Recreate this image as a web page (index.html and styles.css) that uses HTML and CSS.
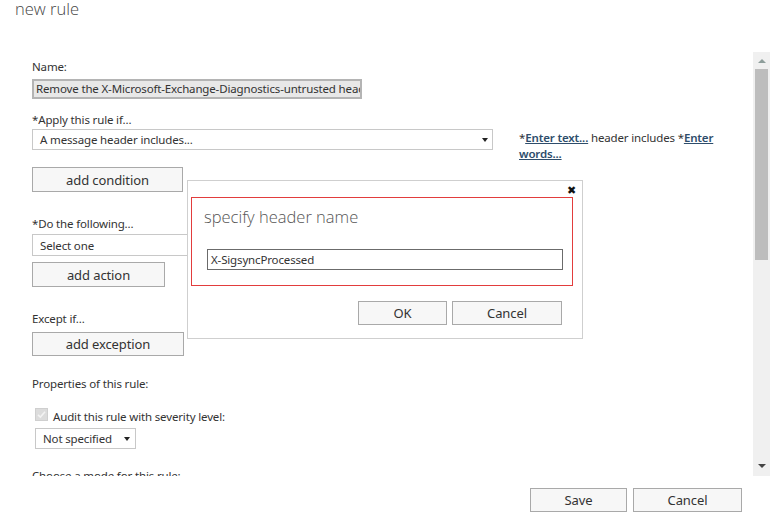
FILE: index.html
```html
<!DOCTYPE html>
<html>
<head>
<meta charset="utf-8">
<link rel="stylesheet" href="styles.css">
</head>
<body>
<div class="page">
  <header class="head"><h1 class="title">new rule</h1></header>
  <div class="main">
    <div class="content">
      <div class="label first">Name:</div>
      <div class="name-input">Remove the X-Microsoft-Exchange-Diagnostics-untrusted header</div>

      <div class="label gap13">*Apply this rule if...</div>
      <div class="cond-row">
        <div class="select wide"><span>A message header includes...</span><span class="caret"></span></div>
        <div class="cond-text">*<a class="lnk">Enter text...</a> header includes *<a class="lnk">Enter words...</a></div>
      </div>
      <button class="btn b-cond">add condition</button>

      <div class="label gap-do">*Do the following...</div>
      <div class="select action"><span>Select one</span></div>
      <button class="btn b-act">add action</button>

      <div class="label gap-ex">Except if...</div>
      <button class="btn b-exc">add exception</button>

      <div class="label gap-prop">Properties of this rule:</div>
      <div class="check-row">
        <svg class="chk" width="13" height="13" viewBox="0 0 13 13"><rect x="0.5" y="0.5" width="12" height="12" fill="#dcdcdc" stroke="#cfcfcf"/><path d="M3 6.8 L5.4 9 L10 3.8" fill="none" stroke="#f3f3f3" stroke-width="1.6"/></svg>
        <span>Audit this rule with severity level:</span>
      </div>
      <div class="select small"><span>Not specified</span><span class="caret"></span></div>
      <div class="label gap-mode">Choose a mode for this rule:</div>
    </div>
    <div class="scrollbar">
      <div class="arr up"></div>
      <div class="thumb"></div>
      <div class="track"></div>
      <div class="arr down"></div>
    </div>
  </div>
  <footer class="foot">
    <button class="btn f-save">Save</button>
    <button class="btn f-cancel">Cancel</button>
  </footer>

  <div class="dialog">
    <div class="close">&#x2716;</div>
    <div class="dlg-box">
      <div class="dlg-title">specify header name</div>
      <div class="dlg-input">X-SigsyncProcessed</div>
    </div>
    <div class="dlg-btns">
      <button class="btn d-ok">OK</button>
      <button class="btn d-cancel">Cancel</button>
    </div>
  </div>
</div>
</body>
</html>
```

FILE: styles.css
```css
* { box-sizing: border-box; }
html, body { margin: 0; padding: 0; background: #fff; }
body {
  font-family: "Noto Sans", "Open Sans", "DejaVu Sans", sans-serif;
  font-size: 11.5px;
  letter-spacing: -0.15px;
  color: #333;
  width: 773px;
  height: 516px;
  overflow: hidden;
}
.page { position: relative; width: 773px; height: 516px; }

.head { height: 52px; }
.title {
  margin: 0;
  padding: 0 0 0 15px;
  font-family: "Open Sans", "Noto Sans", sans-serif;
  font-weight: 300;
  font-size: 16.5px;
  letter-spacing: 0;
  line-height: 20px;
  color: #444;
  position: relative;
  top: -1px;
}

.main { display: flex; height: 424px; }
.content {
  flex: 1;
  height: 424px;
  overflow: hidden;
  padding: 7px 0 0 32px;
}
.label { line-height: 16px; height: 16px; white-space: nowrap; }
.name-input {
  margin-top: 4px;
  width: 330px;
  height: 20px;
  border: 2px solid #b4b4b4;
  background: #e8e8e8;
  line-height: 16px;
  padding-left: 2px;
  white-space: nowrap;
  overflow: hidden;
}
.gap13 { margin-top: 13px; }

.cond-row { display: flex; align-items: flex-start; margin-top: 1px; height: 21px; }
.select {
  height: 21px;
  border: 1px solid #c8c8c8;
  background: #fff;
  display: flex;
  align-items: center;
  justify-content: space-between;
  padding: 0 4px 0 7px;
  white-space: nowrap;
}
.select.wide { width: 461px; flex: none; }
.caret {
  width: 0; height: 0;
  border-left: 3.5px solid transparent;
  border-right: 3.5px solid transparent;
  border-top: 4px solid #222;
}
.cond-text {
  margin-left: 26px;
  width: 196px;
  line-height: 16px;
  padding-top: 1px;
}
.lnk {
  color: #2e4d6b;
  font-weight: 600;
  text-decoration: underline;
}

.btn {
  display: block;
  font-family: "Noto Sans", "Open Sans", sans-serif;
  font-size: 13px;
  letter-spacing: -0.1px;
  color: #333;
  background: #f7f7f7;
  border: 1px solid #a9a9a9;
  padding: 0;
  text-align: center;
  line-height: 22px;
  height: 24px;
}
.b-cond { width: 151px; margin-top: 17px; height: 25px; }
.gap-do { margin-top: 24px; }
.select.action { width: 170px; margin-top: 2px; padding-left: 7px; border-right: none; height: 22px; }
.b-act { width: 133px; margin-top: 6px; height: 25px; }
.gap-ex { margin-top: 24px; }
.b-exc { width: 152px; margin-top: 5px; height: 24px; }
.gap-prop { margin-top: 20px; }

.check-row {
  display: flex;
  align-items: center;
  margin-top: 15px;
  margin-left: 3px;
  height: 14px;
  white-space: nowrap;
}
.chk { display: block; margin-right: 5px; }
.check-row span { position: relative; top: 2px; }
.select.small {
  width: 101px;
  margin-left: 3px;
  margin-top: 7px;
  padding: 0 5px 0 7px;
}
.gap-mode { margin-top: 19px; }

.scrollbar {
  width: 17px;
  margin-right: 3px;
  background: #f0f0f0;
  display: flex;
  flex-direction: column;
  align-items: center;
}
.arr { width: 0; height: 0; border-left: 4px solid transparent; border-right: 4px solid transparent; }
.arr.up { border-bottom: 4px solid #8e9e9b; margin-top: 7px; }
.thumb { width: 13px; height: 191px; background: #bdbdbd; margin-top: 6px; }
.track { flex: 1; }
.arr.down { border-top: 4px solid #444; margin-bottom: 8px; }

.foot {
  display: flex;
  justify-content: flex-end;
  gap: 6px;
  padding: 12px 31px 0 0;
}
.f-save { width: 97px; height: 24px; }
.f-cancel { width: 109px; height: 24px; }

.dialog {
  position: absolute;
  left: 187px;
  top: 180px;
  width: 396px;
  height: 159px;
  background: #fff;
  border: 1px solid #cfcfcf;
  padding: 16px 0 0 3px;
}
.close {
  position: absolute;
  right: 6px;
  top: 4px;
  font-size: 11px;
  line-height: 12px;
  color: #111;
  font-family: "DejaVu Sans", sans-serif;
}
.dlg-box {
  width: 382px;
  height: 89px;
  border: 1px solid #e23d3d;
  padding: 7px 0 0 12px;
}
.dlg-title {
  font-family: "Open Sans", "Noto Sans", sans-serif;
  font-weight: 300;
  font-size: 16.5px;
  letter-spacing: 0;
  line-height: 24px;
  color: #555;
}
.dlg-input {
  margin-top: 20px;
  margin-left: 3px;
  width: 356px;
  height: 21px;
  border: 1px solid #6b6b6b;
  line-height: 19px;
  padding-left: 3px;
  color: #333;
}
.dlg-btns {
  display: flex;
  gap: 5px;
  margin: 15px 0 0 167px;
}
.d-ok { width: 89px; height: 24px; }
.d-cancel { width: 110px; height: 24px; }
```
